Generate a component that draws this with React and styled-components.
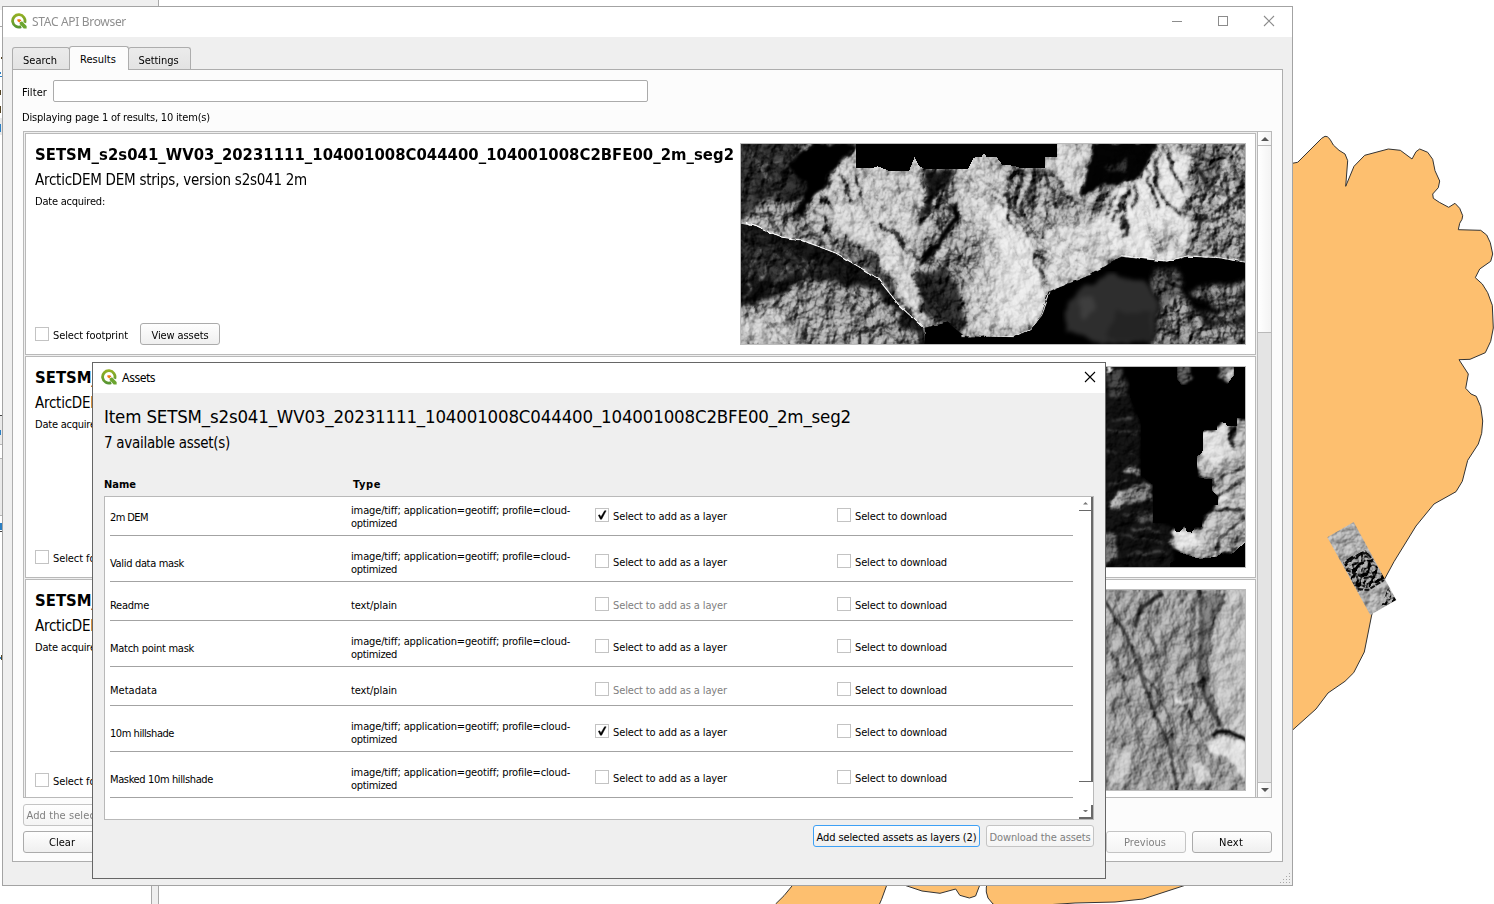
import React, { useLayoutEffect, useRef } from 'react';
import styled, { createGlobalStyle, css } from 'styled-components';

const GlobalStyle = createGlobalStyle`
  * { box-sizing: border-box; }
  html, body { margin: 0; padding: 0; overflow: hidden; background: #fff; }
  body { font: 11px/13px "DejaVu Sans Condensed", "DejaVu Sans", sans-serif; font-stretch: condensed; color: #000; }
`;

const Desktop = styled.div`
  position: relative;
  width: 1494px;
  height: 904px;
  overflow: hidden;
  background: #fff;
`;

const MapCanvas = styled.svg`
  position: absolute;
  inset: 0;
`;

/* ---------- text ---------- */

const Line = styled.span`
  display: block;
  flex: none;
  width: ${p => p.$w}px;
  white-space: nowrap;
  font-size: ${p => p.$size || 11}px;
  line-height: ${p => p.$lh || 13}px;
  font-weight: ${p => (p.$bold ? 700 : 400)};
  color: ${p => p.$color || 'inherit'};
  ${p => p.$ui && css`font-family: "Noto Sans", sans-serif; font-stretch: normal;`}
`;

/* A line of text whose tracking is adjusted so that it fills its set width. */
function Text({ w, size, lh, bold, color, ui, children }) {
  const ref = useRef(null);
  useLayoutEffect(() => {
    const el = ref.current;
    const fit = () => {
      el.style.letterSpacing = '0px';
      const natural = el.getBoundingClientRect().width;
      el.style.letterSpacing = `${(w - natural) / el.textContent.length}px`;
    };
    fit();
  }, [w, children]);
  return (
    <Line $w={w} $size={size} $lh={lh} $bold={bold} $color={color} $ui={ui}>
      <span ref={ref}>{children}</span>
    </Line>
  );
}

/* ---------- windows ---------- */

const Window = styled.section`
  position: absolute;
  left: ${p => p.$x}px;
  top: ${p => p.$y}px;
  width: ${p => p.$w}px;
  height: ${p => p.$h}px;
  display: flex;
  flex-direction: column;
  background: #efefef;
  border: 1px solid ${p => p.$line};
`;

const TitleBar = styled.header`
  flex: none;
  display: flex;
  align-items: center;
  gap: 5px;
  height: ${p => p.$h}px;
  padding: 0 ${p => p.$right}px 0 8px;
  background: #fff;
  svg { margin-bottom: 2px; }
`;

const WindowButtons = styled.div`
  display: flex;
  gap: 34px;
  margin-left: auto;
`;

const Logo = () => (
  <svg width="16" height="16" viewBox="0 0 16 16">
    <defs>
      <linearGradient id="leaf" x1="0" y1="0" x2="0" y2="1">
        <stop offset="0" stopColor="#93b023" />
        <stop offset="1" stopColor="#589632" />
      </linearGradient>
    </defs>
    <path d="M10.2 13.6A6.2 6.2 0 1 1 13.7 9.8" fill="none" stroke="url(#leaf)" strokeWidth="2.8" />
    <path d="M8.6 8.4h2.6l4.4 4.6v2.4h-2.9L8.6 11z" fill="#6ba52f" />
    <path d="M6.4 6.2h2.8l1.3 1.5-2 2-2.1-1.6z" fill="#ee7913" />
    <path d="M8.4 9.6l2.2-2" stroke="#fff" strokeWidth="0.8" />
  </svg>
);

const Minimize = () => (
  <svg width="12" height="12" viewBox="0 0 12 12"><path d="M1 6.5h10" stroke="#8c8c8c" /></svg>
);
const Maximize = () => (
  <svg width="12" height="12" viewBox="0 0 12 12"><rect x="1.5" y="1.5" width="9" height="9" fill="none" stroke="#8c8c8c" /></svg>
);
const Close = ({ color }) => (
  <svg width="12" height="12" viewBox="0 0 12 12"><path d="M1 1l10 10M11 1L1 11" stroke={color} strokeWidth="1.1" /></svg>
);

const Grip = styled.svg`
  position: absolute;
  right: 1px;
  bottom: 1px;
`;

/* ---------- controls ---------- */

const Button = styled.button`
  flex: none;
  display: flex;
  align-items: center;
  justify-content: center;
  width: ${p => p.$w}px;
  height: 22px;
  padding: ${p => p.$down || 1}px ${p => p.$pull || 0}px 0 0;
  font: inherit;
  color: ${p => (p.disabled ? '#808080' : '#000')};
  background: linear-gradient(#fefefe, ${p => (p.disabled ? '#f4f4f4' : '#efefef')});
  border: 1px solid ${p => (p.$focus ? '#3da0f5' : p.disabled ? '#c4c4c4' : '#ababab')};
  border-radius: 3px;
`;

const CheckRow = styled.label`
  display: flex;
  align-items: center;
  gap: 4px;
  color: ${p => (p.$off ? '#808080' : '#000')};
`;

const Box = styled.span`
  flex: none;
  width: 14px;
  height: 14px;
  margin-bottom: 3px;
  background: #fff;
  border: 1px solid #c3c3c3;
  svg { display: block; }
`;

function Check({ w, label, on, off }) {
  return (
    <CheckRow $off={off}>
      <Box>
        {on && (
          <svg width="12" height="12" viewBox="0 0 12 12">
            <path d="M2.4 6.3l1.3-.5 1.2 2.2L8.6 1.8h1.5L5.6 10.2H4.4z" fill="#000" stroke="#000" strokeWidth="0.5" />
          </svg>
        )}
      </Box>
      <Text w={w}>{label}</Text>
    </CheckRow>
  );
}

/* ---------- browser window ---------- */

const Tabs = styled.nav`
  flex: none;
  display: flex;
  align-items: flex-end;
  height: 32px;
  padding-left: 9px;
`;

const Tab = styled.div`
  position: relative;
  z-index: ${p => (p.$active ? 1 : 0)};
  display: flex;
  justify-content: center;
  width: ${p => p.$w}px;
  height: ${p => (p.$active ? 24 : 22)}px;
  margin: 0 ${p => (p.$active ? '-1px -1px -1px' : '0 0 0')};
  padding: 6px 2px 0 0;
  background: ${p => (p.$active ? '#fcfcfc' : 'linear-gradient(#ebebeb, #e3e3e3)')};
  border: 1px solid #adadad;
  border-bottom: 0;
  border-radius: 3px 3px 0 0;
`;

const Pane = styled.main`
  display: flex;
  flex-direction: column;
  width: 1271px;
  height: 793px;
  margin-left: 9px;
  padding: 10px 10px 7px;
  background: #fcfcfc;
  border: 1px solid #adadad;
`;

const FilterRow = styled.div`
  flex: none;
  display: flex;
  align-items: center;
  gap: 6px;
  margin: 0 0 9px -1px;
  > span { padding-top: 2px; }
`;

const FilterInput = styled.input`
  width: 595px;
  height: 22px;
  background: #fff;
  border: 1px solid #ababab;
  border-radius: 2px;
`;

const Status = styled.div`
  flex: none;
  height: 20px;
  margin-left: -1px;
`;

const ScrollFrame = styled.div`
  flex: none;
  display: flex;
  width: 1249px;
  height: 667px;
  background: #efefef;
  border: 1px solid #b9b9b9;
  border-right: 0;
`;

const Cards = styled.div`
  flex: 1;
  display: flex;
  flex-direction: column;
  gap: 1px;
  padding: 1px;
  overflow: hidden;
`;

const Card = styled.article`
  flex: none;
  display: flex;
  justify-content: space-between;
  height: 222px;
  padding: 9px 9px 9px 8px;
  background: #fff;
  border: 1px solid #b9b9b9;
`;

const CardInfo = styled.div`
  display: flex;
  flex-direction: column;
  padding: 1px 0 0 1px;
`;

const CardActions = styled.div`
  display: flex;
  gap: 12px;
  margin-top: auto;
  label { padding-top: 2px; }
`;

const Thumb = styled.svg`
  flex: none;
  width: 506px;
  height: 202px;
  background: #000;
  border: 1px solid #bdbdbd;
`;

const ScrollBar = styled.div`
  flex: none;
  display: flex;
  flex-direction: column;
  justify-content: space-between;
  width: 15px;
  background: #e4e4e4;
  border: 1px solid #b9b9b9;
  border-width: 0 1px;
`;

const ScrollPart = styled.div`
  display: flex;
  align-items: center;
  justify-content: center;
  height: ${p => p.$h}px;
  background: linear-gradient(90deg, #fff, #f3f3f3);
  border: 0 solid #b9b9b9;
  border-bottom-width: ${p => (p.$end ? 0 : 1)}px;
  border-top-width: ${p => (p.$end ? 1 : 0)}px;
`;

const Arrow = ({ down, size = 8, color = '#555' }) => (
  <svg width={size} height={size / 2} viewBox="0 0 8 4">
    <path d={down ? 'M0 0h8L4 4z' : 'M0 4h8L4 0z'} fill={color} />
  </svg>
);

const Footer = styled.div`
  flex: none;
  display: flex;
  gap: 6px;
  margin-top: ${p => p.$top}px;
`;

const Spacer = styled.span`
  flex: 1;
`;

/* ---------- assets dialog ---------- */

const DialogBody = styled.div`
  display: flex;
  flex-direction: column;
  padding: 12px 11px 0;
`;

const Heads = styled.div`
  display: grid;
  grid-template-columns: 249px 1fr;
  margin: 21px 0 5px;
`;

const AssetFrame = styled.div`
  display: flex;
  height: 324px;
  width: 990px;
  background: #fff;
  border: 1px solid #b9b9b9;
`;

const AssetList = styled.div`
  width: 964px;
  margin: 0 6px 0 5px;
`;

const AssetRow = styled.div`
  display: grid;
  grid-template-columns: 241px 244px 242px 1fr;
  align-items: center;
  height: ${p => (p.$first || p.$short ? 39 : 46)}px;
  padding-top: ${p => (p.$first ? 0 : p.$short ? 9 : 7)}px;
  border-bottom: 1px solid #a3a3a3;
`;

const AssetCell = styled.div`
  padding-top: ${p => p.$down}px;
`;

const PlainBar = styled.div`
  display: flex;
  flex-direction: column;
  width: 14px;
`;

const PlainPart = styled.div`
  display: flex;
  align-items: center;
  justify-content: center;
  height: ${p => p.$h}px;
  margin-top: ${p => p.$gap || 0}px;
  border: solid #696969;
  border-width: 0 2px ${p => (p.$thin ? 1 : 2)}px 0;
`;

/* ---------- relief pictures ---------- */

const Relief = ({ id, freq, seed, scale, az = 225, elev = 45, octaves = 5, warp = 0 }) => (
  <filter id={id} x="0" y="0" width="100%" height="100%" colorInterpolationFilters="sRGB">
    <feTurbulence type="fractalNoise" baseFrequency={freq} numOctaves={octaves} seed={seed} />
    <feColorMatrix values="0 0 0 0 0  0 0 0 0 0  0 0 0 0 0  1 0 0 0 0" />
    <feGaussianBlur stdDeviation="0.6" />
    <feDiffuseLighting surfaceScale={scale} lightingColor="#fff" diffuseConstant="0.72" result="lit">
      <feDistantLight azimuth={az} elevation={elev} />
    </feDiffuseLighting>
    {warp > 0 && <feTurbulence type="fractalNoise" baseFrequency="0.014" numOctaves="2" seed="31" result="bend" />}
    {warp > 0 && <feDisplacementMap in="lit" in2="bend" scale={warp} xChannelSelector="R" yChannelSelector="G" />}
  </filter>
);

const Rough = ({ id, amount, blur, freq = 0.09 }) => (
  <filter id={id} x="-5%" y="-5%" width="110%" height="110%" colorInterpolationFilters="sRGB">
    <feTurbulence type="fractalNoise" baseFrequency={freq} numOctaves="3" seed="4" result="n" />
    <feDisplacementMap in="SourceGraphic" in2="n" scale={amount} xChannelSelector="R" yChannelSelector="G" />
    <feGaussianBlur stdDeviation={blur} />
  </filter>
);

const Overlay = styled.g`
  mix-blend-mode: ${p => p.$mode || 'overlay'};
`;

const GlacierThumb = () => (
  <Thumb viewBox="0 0 504 200">
    <defs>
      <Relief id="g-fine" freq="0.08 0.07" seed="3" scale="6" />
      <Relief id="g-streak" freq="0.016 0.05" seed="8" scale="8" az={250} octaves={4} warp={60} />
      <Rough id="g-soft" amount="16" blur="2.2" freq="0.05" />
      <Rough id="g-detail" amount="14" blur="1" freq="0.06" />
      <Rough id="g-edge" amount="3" blur="0.3" />
    </defs>
    <rect width="504" height="200" fill="#999" />
    <g filter="url(#g-soft)">
      <g transform="scale(0.3476 0.3333) translate(-16 -57)">
        <rect x="-40" y="0" width="1600" height="760" fill="#a8a8a8" />
        <path d="M-20 20H370L300 110L250 180L150 250L60 270L-20 290z" fill="#2a2a2a" />
        <path d="M180 57L290 57L230 110L200 130z" fill="#808080" />
        <path d="M40 270L110 210L170 250L230 330L300 385L190 345L90 315z" fill="#8a8a8a" />
        <path d="M350 60H550V220L525 300L520 400L540 560L470 490L400 420L300 300L240 210L300 110z" fill="#c6c6c6" />
        <path d="M300 330L420 400L480 500L530 590L480 540L410 460L330 400L290 350z" fill="#5a5a5a" />
        <path d="M280 220L390 300L510 400L560 580L520 590L440 440L300 310z" fill="#d2d2d2" />
        <path d="M545 125L632 135L615 180L580 230L540 290L526 290L548 230z" fill="#111" />
        <path d="M560 290L630 200L630 250L600 310L530 370L510 360z" fill="#777" />
        <path d="M570 400L680 330L740 400L720 480L660 560L560 520L520 450z" fill="#8a8a8a" />
        <path d="M515 440L600 430L640 490L665 610L650 630L580 585L540 560z" fill="#242424" />
        <path d="M640 100L760 100L800 200L870 400L905 500L880 570L840 615L700 625L650 500L720 400L690 300L640 270z" fill="#c8c8c8" />
        <path d="M700 230L780 250L860 340L868 430L902 500L870 590L760 600L740 500L760 380z" fill="#e2e2e2" />
        <path d="M750 110L885 110L890 180L840 260L810 320L790 260L780 180z" fill="#828282" />
        <path d="M920 57H1035L1015 120L1000 190L960 190L890 130z" fill="#d0d0d0" />
        <path d="M885 140L960 260L900 340L880 300L890 230z" fill="#aaa" />
        <path d="M880 350L960 300L1050 280L1110 390L1020 445L910 495z" fill="#d4d4d4" />
        <path d="M1130 150L1060 220L1030 285L1020 245L1060 190z" fill="#262626" />
        <path d="M1160 160L1220 70L1310 90L1290 240L1314 330L1290 395L1240 410L1110 390L1040 290L1100 190z" fill="#e4e4e4" />
        <path d="M1190 320L1250 310L1280 360L1210 390z" fill="#b5b5b5" />
        <path d="M1310 57H1500V420L1300 395L1316 320L1296 240z" fill="#868686" />
        <path d="M1320 70L1420 80L1370 190L1310 200z" fill="#5c5c5c" />
      </g>
    </g>
    <g filter="url(#g-detail)">
      <g transform="scale(0.3476 0.3333) translate(-16 -57)" fill="none">
        <path d="M150 120L220 57H350L300 110L262 170L232 220L180 278L165 270L198 225L195 170z" fill="#000" />
        <path d="M634 225L642 270L620 330L560 405L515 440L520 415L590 340L618 285z" fill="#000" />
        <path d="M1032 50H1218L1190 100L1165 155L1060 180L990 215L1008 150L1022 110z" fill="#020202" />
        <path d="M1070 120L1130 100L1120 135L1080 145z" fill="#242424" />
        <path d="M340 130L362 215M300 140L340 240M230 250L290 370M255 210L275 260M420 290L520 400" stroke="#444" strokeWidth="8" />
        <path d="M560 250L610 150M575 260L625 165M590 310L625 240M820 270L860 140M845 240L875 140M800 230L825 150M780 200L800 320" stroke="#1c1c1c" strokeWidth="8" />
        <path d="M545 280L590 200M565 330L605 280M810 250L845 150" stroke="#bbb" strokeWidth="6" />
        <path d="M895 150L925 250L945 290M915 150L980 250M900 230L890 340" stroke="#555" strokeWidth="7" />
        <path d="M855 350L868 400L900 480M740 200L770 240" stroke="#777" strokeWidth="8" />
        <path d="M1135 175L1090 290M1125 200L1118 330M1160 170L1150 250M1180 130L1200 210L1215 250M1212 90L1210 170L1240 230L1290 270M1250 90L1280 200M1105 200L1070 270" stroke="#2a2a2a" strokeWidth="8" />
        <path d="M1400 140L1330 240M1468 170L1390 240L1320 320M1468 230L1400 300M1440 90L1350 200M1450 200L1340 290M1320 90L1350 170" stroke="#222" strokeWidth="8" />
        <path d="M1350 230L1410 130M1340 330L1460 250M1360 270L1440 190M1450 70L1410 120" stroke="#d0d0d0" strokeWidth="8" />
        <path d="M40 80L100 160M80 230L140 200M60 120L130 110" stroke="#666" strokeWidth="8" />
      </g>
    </g>
    <g filter="url(#g-edge)">
      <g transform="scale(0.3476 0.3333) translate(-16 -57)">
        <path d="M-20 285L60 302L130 336L190 345L290 385L410 460L470 540L540 608L550 720H-20z" fill="#121212" />
        <path d="M900 500L1020 450L1110 395L1240 410L1300 395L1390 398L1500 418V720H540L545 608L610 592L655 630L800 635L850 612L880 570z" fill="#000" />
      </g>
    </g>
    <g filter="url(#g-soft)">
      <g transform="scale(0.3476 0.3333) translate(-16 -57)">
        <path d="M-20 560L120 510L215 460L330 485L410 500L460 560L525 620L520 720H-20z" fill="#8c8c8c" />
        <path d="M16 580L130 560L200 660H-20z" fill="#bcbcbc" />
        <path d="M450 590L500 550L530 600L520 640z" fill="#151515" />
        <path d="M16 330L90 340L200 400L290 440L200 450L100 470L16 440z" fill="#262626" />
        <path d="M1200 425L1270 430L1290 500L1225 570L1195 480z" fill="#444" />
        <path d="M1225 560L1290 500L1340 570L1470 560V680H1190z" fill="#747474" />
        <path d="M1310 490L1468 470V560L1380 545z" fill="#686868" />
        <path d="M1310 560L1420 590L1468 570V600L1350 600z" fill="#111" />
      </g>
    </g>
    <g filter="url(#g-detail)">
      <g transform="scale(0.3476 0.3333) translate(-16 -57)" fill="none">
        <path d="M110 390L60 480M70 380L30 460M150 420L100 500M190 400L130 470M230 410L180 450M50 420L25 520" stroke="#5c5c5c" strokeWidth="6" />
      </g>
    </g>
    <g filter="url(#g-edge)">
      <g transform="scale(0.3476 0.3333) translate(-16 -57)" fill="none" stroke="#fff">
        <path d="M30 292L60 302L130 336L190 345L290 385L410 460L470 540L540 608" strokeWidth="3.5" />
        <path d="M650 632L800 635L850 612L882 570L905 500M1110 392L1240 408L1300 393L1390 398L1468 412" strokeWidth="2.5" />
      </g>
    </g>
    <Overlay><rect width="504" height="200" filter="url(#g-fine)" /></Overlay>
    <Overlay><g transform="rotate(56 250 100)"><rect x="-80" y="-260" width="660" height="720" filter="url(#g-streak)" opacity="0.5" /></g></Overlay>
    <g filter="url(#g-soft)">
      <g transform="scale(0.3476 0.3333) translate(-16 -57)">
        <path d="M1090 450L1190 475L1222 560L1195 650L1040 657L955 620L962 520L1010 480z" fill="#2e2e2e" />
        <path d="M990 520L1025 515L1035 570L995 575z" fill="#3e3e3e" />
        <path d="M1090 560L1200 570L1190 650L1070 640z" fill="#242424" />
      </g>
    </g>
    <g transform="scale(0.3476 0.3333) translate(-16 -57)" shapeRendering="crispEdges">
      <path d="M347 50H924V96H891V129H820L800 122L768 120L752 97L722 95L715 84L708 96L685 98L670 131H545L530 125L515 97L500 137H440L410 124L395 129H347z" fill="#000" />
    </g>
  </Thumb>
);

const CliffThumb = () => (
  <Thumb viewBox="0 0 504 200">
    <defs>
      <Relief id="c-fine" freq="0.07" seed="12" scale="5" />
      <Rough id="c-soft" amount="8" blur="1" />
    </defs>
    <g filter="url(#c-soft)">
      <g transform="translate(349 -12) scale(0.3333)">
        <rect x="-1060" y="20" width="1560" height="640" fill="#000" />
        <path d="M-1000 30H100L120 130L150 200V370L185 390L190 500L250 520V640H-1000z" fill="#101010" />
        <path d="M46 40L95 45L105 120L60 130z" fill="#363636" />
        <path d="M46 36H66L52 60z" fill="#fff" />
        <path d="M60 455L75 410L120 398L182 388L188 440L140 438L80 465z" fill="#6c6c6c" />
        <path d="M60 455L75 415L95 410L80 460z" fill="#aaa" />
        <path d="M90 350L120 332L150 345L148 360L120 350z" fill="#888" />
        <path d="M50 290L80 296M110 292H135M46 225L150 232M60 190H130M60 390L110 375M100 480L180 470M90 540L220 560M110 600L230 590M130 520L210 530" stroke="#484848" strokeWidth="5" />
        <path d="M40 530L80 540L78 610L40 635z" fill="#5c5c5c" />
        <path d="M140 490L190 475V500L150 505z" fill="#444" />
        <path d="M262 30H305L302 70L275 92L262 72z" fill="#4a4a4a" />
        <path d="M385 30H432V60L412 88L385 68z" fill="#666" />
        <path d="M415 45L432 40V60L412 88z" fill="#ccc" />
        <path d="M321 300L338 228L381 222L400 200L441 212V190H480V560L450 600L410 590L380 605L330 612L265 590L240 560L255 520L340 517L350 480L384 450V428L366 405V372L321 366z" fill="#b4b4b4" />
        <path d="M340 235L410 215L435 290L380 330L335 300z" fill="#dcdcdc" />
        <path d="M245 530L310 530L330 570L260 580z" fill="#e4e4e4" />
        <path d="M390 560L467 500V560L430 590z" fill="#8c8c8c" />
        <path d="M366 388L410 355L470 340M384 425L425 400L467 372M340 487L375 465L430 462L467 470M380 610L386 550L420 525L467 480" stroke="#1a1a1a" strokeWidth="7" fill="none" />
        <path d="M384 435L430 432L467 420M380 460L430 452" stroke="#eee" strokeWidth="6" fill="none" />
        <path d="M412 212H437L433 288L420 265z" fill="#222" />
      </g>
    </g>
    <Overlay><rect width="504" height="200" filter="url(#c-fine)" /></Overlay>
    <g transform="translate(349 -12) scale(0.3333)" shapeRendering="crispEdges">
      <path d="M120 30H262V74L275 90H385L412 88L432 60V30H480V183H455V188H441V212H412L405 203L381 201V224H350L338 228V288L330 300L321 303V366L350 372H366V405L384 425V450H370L355 470L335 482V517H315L305 533L290 530L285 512L270 530H257L250 505H190V390L152 360V200L120 125z" fill="#000" />
      <path d="M240 625L262 612V590L330 612L380 605L395 595L410 605L435 590L467 560V625L455 640H240z" fill="#000" />
    </g>
  </Thumb>
);

const IceThumb = () => (
  <Thumb viewBox="0 0 504 200">
    <defs>
      <Relief id="i-fine" freq="0.06 0.045" seed="21" scale="5" octaves={4} az={215} />
      <Rough id="i-soft" amount="5" blur="1" />
    </defs>
    <g filter="url(#i-soft)">
      <g transform="translate(349 -10) scale(0.3333)">
        <rect x="-1060" y="0" width="1560" height="660" fill="#979797" />
        <path d="M405 20H490V480L400 445L362 330L355 240L375 110z" fill="#b9b9b9" />
        <path d="M335 50L410 40L375 110L355 240L362 330L398 445L370 420L330 340L315 240z" fill="#626262" />
        <path d="M340 120L330 250L345 350L392 440" stroke="#303030" strokeWidth="8" fill="none" />
        <path d="M135 140L155 80L220 40" stroke="#222" strokeWidth="13" fill="none" />
        <path d="M330 30L335 110M405 60L375 100" stroke="#444" strokeWidth="10" fill="none" />
        <path d="M46 65L85 130L130 210L170 340L238 500L264 640" stroke="#262626" strokeWidth="8" fill="none" />
        <path d="M145 215L160 290L205 330L240 430L250 520M185 170L210 260M285 370L275 440M290 380L335 470M120 350V420M60 210L105 300" stroke="#444" strokeWidth="7" fill="none" />
        <path d="M55 500L130 520L100 610L46 600z" fill="#bababa" />
        <path d="M345 490L400 465L467 490V600L410 530L365 520z" fill="#dedede" />
        <path d="M305 550L345 555L370 600L320 615z" fill="#d0d0d0" />
        <path d="M250 330L262 365L280 372L310 355" stroke="#eee" strokeWidth="5" fill="none" />
        <path d="M245 300L250 345M310 310L312 350" stroke="#444" strokeWidth="5" fill="none" />
        <path d="M365 470L385 455L420 455L467 480" stroke="#000" strokeWidth="11" fill="none" />
      </g>
    </g>
    <Overlay><rect width="504" height="200" filter="url(#i-fine)" /></Overlay>
  </Thumb>
);

/* ---------- data ---------- */

const GEOTIFF = [['image/tiff; application=geotiff; profile=cloud-', 219], ['optimized', 46]];
const PLAIN = [['text/plain', 46]];

const assets = [
  { name: '2m DEM', w: 38, type: GEOTIFF, on: true },
  { name: 'Valid data mask', w: 74, type: GEOTIFF },
  { name: 'Readme', w: 39, type: PLAIN, off: true },
  { name: 'Match point mask', w: 84, type: GEOTIFF },
  { name: 'Metadata', w: 47, type: PLAIN, off: true },
  { name: '10m hillshade', w: 64, type: GEOTIFF, on: true },
  { name: 'Masked 10m hillshade', w: 103, type: GEOTIFF },
];

const ITEM = 'SETSM_s2s041_WV03_20231111_104001008C044400_104001008C2BFE00_2m_seg2';
const thumbs = [GlacierThumb, CliffThumb, IceThumb];

const COAST =
  'M1280 163.3L1292.3 163.3L1297.7 162.3L1321.7 138.3L1325 136.3L1327.3 136.7L1330 139.3L1333.3 145L1339 150.3L1345 154L1347.7 160.7L1345.7 186.3L1354 166.3L1364.7 155.3L1388.3 149L1400.3 150.3L1412 159L1416 151.7L1419.7 149L1427.7 152.3L1432.7 159.3L1435 170.7L1439.7 181L1438.3 187.7L1432.7 194L1433.3 198.3L1439.3 202.3L1448.7 207.3L1455 203.3L1459.7 208.3L1462.7 215.7L1462 219.3L1459.7 223.3L1458.3 229.7L1480.7 230.3L1486.7 235L1490.3 242.7L1492.7 254L1490.7 261.3L1479.7 269L1475.3 277.7L1482.3 284L1487.7 292.7L1492.3 305.3L1493.3 328L1490.7 341.3L1485.3 352.7L1470 359.3L1459 359.7L1468.3 374L1465.7 388.3L1471 394L1476.3 396.3L1480.7 406.7L1482.7 421L1481.7 433.3L1478.3 444L1467.7 460.3L1462.3 481.3L1456 491.7L1434 504L1416 526L1394 561.7L1385 578.3L1371.7 615L1364.3 652L1353.7 672.7L1345 681.3L1328 693L1316 709L1292.3 730.3L1280 741z';

const Backdrop = () => (
  <MapCanvas width="1494" height="904" viewBox="0 0 1494 904">
    <defs>
      <Relief id="m-fine" freq="0.12" seed="5" scale="3" />
      <Relief id="m-rock" freq="0.2" seed="9" scale="9" />
      <clipPath id="strip"><path d="M1327.3 537.3L1353.7 522L1396.3 600L1370.3 615z" /></clipPath>
      <clipPath id="rock"><path d="M1343 562L1352 556L1366 550L1385 578L1384 582L1357 592z" /></clipPath>
      <clipPath id="rock2"><path d="M1388 588L1396.3 600L1380 610z" /></clipPath>
    </defs>
    <g fill="#fdbf6f" stroke="#333" strokeWidth="1">
      <path d={COAST} />
      <path d="M796 880L792.8 885L784 895.7L775.6 904L770 912H876L881.6 899.3L886.8 885V880z" />
      <path d="M895 880L904 885L922 891L940 893.3L955.7 889L959.8 895.3L969.4 898L975.6 896L979.8 885V880z" />
      <path d="M989 880L986.3 887V892L988 898L993 904L1000 908L1075 903L1115 902L1143 899L1186 885L1200 880z" />
    </g>
    <g clipPath="url(#strip)">
      <rect x="1320" y="515" width="80" height="105" fill="#adadad" />
      <Overlay><rect x="1320" y="515" width="80" height="105" filter="url(#m-fine)" /></Overlay>
      <g clipPath="url(#rock)"><rect x="1320" y="515" width="80" height="105" filter="url(#m-rock)" /></g>
      <g clipPath="url(#rock2)"><rect x="1320" y="515" width="80" height="105" filter="url(#m-rock)" /></g>
      <path d="M1345 563L1352 559L1360 554L1367 553L1373 560M1346 570L1354 573L1364 578L1373 577M1358 589L1368 590L1384 580M1388 608L1397 600" stroke="#111" strokeWidth="2" strokeDasharray="5 1.5" fill="none" />
    </g>
    <path d="M0 0H158V10H0z" fill="#efefef" />
    <path d="M158.5 0V8M0 26.5H3" stroke="#a8a8a8" />
    <path d="M0 118H3V135H0zM0 416H3V444H0zM0 458H3V515H0z" fill="#e9e9e9" />
    <path d="M0 415.5H3M0 531.5H3" stroke="#444" />
    <path d="M0 444.5H3M0 458.5H3M0 515.5H3" stroke="#b5b5b5" />
    <path d="M1 57h1v2h-1zM0 90h1v5h-1zM0 106h1v7h-1zM1 655h1v5h-1z" fill="#542" />
    <path d="M0 72h1v2h-1zM0 76h2v1h-2zM0 124h1v8h-1zM0 430h1v5h-1zM0 523h2v7h-2zM0 657h1v2h-1z" fill="#2a7fc4" />
    <rect x="152" y="880" width="6" height="30" fill="#efefef" />
    <path d="M151.5 880V904M158.5 880V904" stroke="#a8a8a8" />
  </MapCanvas>
);

const gripDots = [[9, 0], [9, 3], [6, 3], [9, 6], [6, 6], [3, 6], [9, 9], [6, 9], [3, 9], [0, 9]];

function BrowserWindow() {
  return (
    <Window $x={2} $y={6} $w={1291} $h={880} $line="#a3a3a3">
      <TitleBar $h={30} $right={17}>
        <Logo />
        <Text w={94} size={12} lh={16} ui color="#8f8f8f">STAC API Browser</Text>
        <WindowButtons>
          <Minimize />
          <Maximize />
          <Close color="#8c8c8c" />
        </WindowButtons>
      </TitleBar>
      <Tabs>
        <Tab $w={58}><Text w={34}>Search</Text></Tab>
        <Tab $w={60} $active><Text w={36}>Results</Text></Tab>
        <Tab $w={63}><Text w={40}>Settings</Text></Tab>
      </Tabs>
      <Pane>
        <FilterRow>
          <Text w={25}>Filter</Text>
          <FilterInput readOnly />
        </FilterRow>
        <Status><Text w={188}>Displaying page 1 of results, 10 item(s)</Text></Status>
        <ScrollFrame>
          <Cards>
            {thumbs.map((Picture, i) => (
              <Card key={i}>
                <CardInfo>
                  <Text w={699} size={16.5} lh={22} bold>{ITEM}</Text>
                  <Text w={272} size={15} lh={29}>ArcticDEM DEM strips, version s2s041 2m</Text>
                  <Text w={70}>Date acquired:</Text>
                  <CardActions>
                    <Check w={75} label="Select footprint" />
                    <Button $w={80} $down={2}><Text w={57}>View assets</Text></Button>
                  </CardActions>
                </CardInfo>
                <Picture />
              </Card>
            ))}
          </Cards>
          <ScrollBar>
            <div>
              <ScrollPart $h={14}><Arrow /></ScrollPart>
              <ScrollPart $h={187} />
            </div>
            <ScrollPart $h={15} $end><Arrow down /></ScrollPart>
          </ScrollBar>
        </ScrollFrame>
        <Footer $top={6}>
          <Button $w={144} disabled><Text w={137}>Add the selected footprints</Text></Button>
        </Footer>
        <Footer $top={5}>
          <Button $w={80} $pull={2}><Text w={26}>Clear</Text></Button>
          <Spacer />
          <Button $w={80} $pull={2} disabled><Text w={42}>Previous</Text></Button>
          <Button $w={80} $pull={2}><Text w={24}>Next</Text></Button>
        </Footer>
      </Pane>
      <Grip width="11" height="11">
        {gripDots.map(([x, y]) => <rect key={`${x}-${y}`} x={x} y={y} width="1" height="1" fill="#a8a8a8" />)}
      </Grip>
    </Window>
  );
}

function AssetsDialog() {
  return (
    <Window $x={92} $y={362} $w={1014} $h={517} $line="#666">
      <TitleBar $h={30} $right={9}>
        <Logo />
        <Text w={33} size={12} lh={16} ui>Assets</Text>
        <WindowButtons><Close color="#000" /></WindowButtons>
      </TitleBar>
      <DialogBody>
        <Text w={747} size={18.5} lh={24}>{`Item ${ITEM}`}</Text>
        <Text w={126} size={15} lh={28}>7 available asset(s)</Text>
        <Heads>
          <Text w={32} bold>Name</Text>
          <Text w={28} bold>Type</Text>
        </Heads>
        <AssetFrame>
          <AssetList>
            {assets.map((a, i) => (
              <AssetRow key={a.name} $first={i === 0} $short={a.off}>
                <AssetCell $down={a.off ? 0 : 2}><Text w={a.w}>{a.name}</Text></AssetCell>
                <AssetCell $down={a.off ? 0 : 2}>
                  {a.type.map(([t, w]) => <Text key={t} w={w}>{t}</Text>)}
                </AssetCell>
                <Check w={114} label="Select to add as a layer" on={a.on} off={a.off} />
                <Check w={92} label="Select to download" />
              </AssetRow>
            ))}
          </AssetList>
          <PlainBar>
            <PlainPart $h={14} $thin><Arrow size={5} color="#777" /></PlainPart>
            <PlainPart $h={271} $thin />
            <PlainPart $h={14} $gap={23}><Arrow size={5} color="#777" down /></PlainPart>
          </PlainBar>
        </AssetFrame>
        <Footer $top={5}>
          <Spacer />
          <Button $w={167} $focus $down={2}><Text w={160}>Add selected assets as layers (2)</Text></Button>
          <Button $w={108} disabled $down={2}><Text w={101}>Download the assets</Text></Button>
        </Footer>
      </DialogBody>
    </Window>
  );
}

export default function App() {
  return (
    <Desktop>
      <GlobalStyle />
      <Backdrop />
      <BrowserWindow />
      <AssetsDialog />
    </Desktop>
  );
}
